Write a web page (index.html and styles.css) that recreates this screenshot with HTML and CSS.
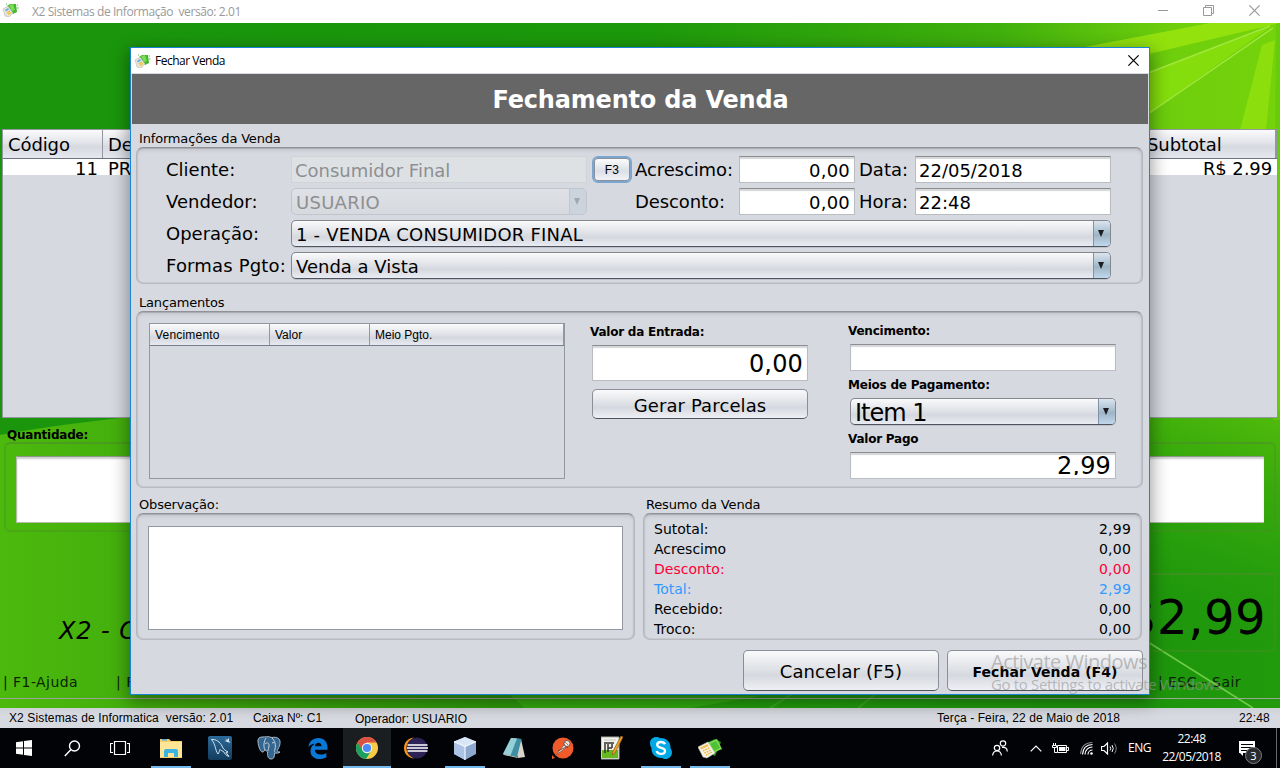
FILE: index.html
```html
<!DOCTYPE html>
<html lang="pt-BR">
<head>
<meta charset="utf-8">
<title>X2 Sistemas de Informação</title>
<link rel="stylesheet" href="styles.css">
</head>
<body>
<svg width="0" height="0" class="defs" aria-hidden="true">
  <defs>
    <symbol id="app-icon" viewBox="0 0 24 21">
      <path d="M8 5 17 1l6 3-6 14-6-3z" fill="#2f9f22"/>
      <path d="M10 5 19 1l5 10-9 4z" fill="#7ed957"/>
      <path d="M12 6l6-3 4 7-6 3z" fill="#4ec234"/>
      <path d="M0 9 10 4l7 11-8 5-4-1z" fill="#f6f3e8" stroke="#c4c2b6" stroke-width=".6"/>
      <path d="M2 9.500 9.500 6l1.200 2-7.500 3.600z" fill="#f0c353"/>
      <path d="m5 13 7-3.400M6.300 15.200l7-3.400M7.800 17.300l6.500-3.300" stroke="#eebb42" stroke-width="1.400" stroke-dasharray="1.800 .8"/>
    </symbol>
    <symbol id="app-icon-small" viewBox="0 0 17 14">
      <path d="M5 3 8 1l6 0 1 8-4 2z" fill="#3fb82c"/>
      <path d="M7 2l4-1 2 6-3 1z" fill="#7bdc55"/>
      <path d="M15 2h1M15 5h1.500M4 1h1" stroke="#57b944"/>
      <path d="M1 6 6 3l5 7-4 4-4-1z" fill="#e6e4da" stroke="#bbb9b0" stroke-width=".6"/>
      <path d="M3 7l3-2 1 1.500-3 2z" fill="#58b5e6"/>
      <path d="m5 10 3-2M6 11.500l3-2" stroke="#f2c12e" stroke-width="1.300"/>
    </symbol>
    <symbol id="close" viewBox="0 0 10 10"><path d="M.3.3l9.400 9.400M9.700.3.3 9.700" stroke="currentColor" stroke-width="1.100" fill="none"/></symbol>
  </defs>
</svg>

<div class="desktop">
  <header class="app-title">
    <svg class="app-title-icon"><use href="#app-icon-small"/></svg>
    <span class="app-title-text">X2 Sistemas de Informação&nbsp; versão: 2.01</span>
    <div class="win-buttons">
      <svg width="10" height="10" viewBox="0 0 10 10"><path d="M0 5.500h10" stroke="currentColor"/></svg>
      <svg width="11" height="11" viewBox="0 0 11 11"><path d="M.5 2.500h8v8h-8zM2.500 2.500v-2h8v8h-2" fill="none" stroke="currentColor"/></svg>
      <svg width="11" height="11"><use href="#close"/></svg>
    </div>
  </header>

  <main class="pos">
    <svg class="wallpaper" viewBox="0 23 1280 685" preserveAspectRatio="none">
      <defs>
        <linearGradient id="w-top" x1="0" x2="1" y1="0" y2="0">
          <stop offset="0" stop-color="#1a950c"/><stop offset=".5" stop-color="#1c980b"/><stop offset=".78" stop-color="#40b00c"/><stop offset=".92" stop-color="#6fcf0c"/><stop offset="1" stop-color="#75d30b"/>
        </linearGradient>
        <linearGradient id="w-low" x1="0" x2="1" y1="0" y2="0">
          <stop offset="0" stop-color="#4cb90d"/><stop offset=".15" stop-color="#3faa0c"/><stop offset=".45" stop-color="#2a940b"/><stop offset=".6" stop-color="#219c0d"/><stop offset=".9" stop-color="#1e960c"/><stop offset="1" stop-color="#219a0c"/>
        </linearGradient>
        <linearGradient id="w-right" gradientUnits="userSpaceOnUse" x1="1190" y1="640" x2="1270" y2="410">
          <stop offset="0" stop-color="#21980c" stop-opacity="0"/><stop offset=".35" stop-color="#269e0c"/><stop offset=".7" stop-color="#38aa0b"/><stop offset="1" stop-color="#51bb0b"/>
        </linearGradient>
      </defs>
      <rect y="23" width="1280" height="440" fill="url(#w-top)"/>
      <path d="M0 435Q60 424 140 416H1280V708H0z" fill="url(#w-low)"/>
      <path d="M1100 410H1280V708H1100z" fill="url(#w-right)"/>
      <path d="M1085 47 1210 23H1280L1140 56z" fill="#9ce60e" opacity=".8"/>
      <path d="M1148 73 1270 27 1148 114z" fill="#8ce20c" opacity=".75"/>
      <path d="M1148 73 1270 26M1148 114 1273 28" stroke="#b2ef4e" stroke-width="1.500" opacity=".75" fill="none"/>
      <path d="M1262 45 1275 40 1266 130H1240z" fill="#9ce80e" opacity=".6"/>
      <path d="M1276 24 1280 23V420H1273z" fill="#62c90a" opacity=".7"/>
      <path d="M1148 642 1253 708" stroke="#83da55" stroke-width="1.600" opacity=".8"/>
      <path d="m770 708 25-16M858 708l20-16" stroke="#5cbc3a" opacity=".4" stroke-width="2"/>
      <path d="M510 695Q520 703 524 708H690L760 696z" fill="#3ebb12" opacity=".5"/>
    </svg>

    <div class="sale-table">
      <div class="sale-head"><span class="c-code">Código</span><span class="c-desc">De</span><span class="c-sub">Subtotal</span></div>
      <div class="sale-row"><span class="c-code">11</span><span class="c-desc">PR</span><span class="c-sub">R$ 2,99</span></div>
    </div>
    <div class="qty-label">Quantidade:</div>
    <div class="qty-panel"><div class="qty-input"></div></div>
    <div class="sale-footer">
      <div class="company">X2 - C</div>
      <div class="grand-total">$2,99</div>
    </div>
    <div class="shortcuts"><span>| F1-Ajuda</span><span class="sc-next">| F</span><span class="sc-esc">| <b>ESC - Sair</b></span></div>
  </main>

  <footer class="status">
    <span class="st-name">X2 Sistemas de Informatica&nbsp; versão: 2.01</span>
    <span class="st-box">Caixa Nº: C1</span>
    <span class="st-op">Operador: USUARIO</span>
    <span class="st-date">Terça - Feira, 22 de Maio de 2018</span>
    <span class="st-time">22:48</span>
  </footer>

  <nav class="taskbar">
    <div class="tb tb-sys"><svg width="16" height="16" viewBox="0 0 16 16"><path d="M0 2.300 7 1.200V7.500H0zM8 1 16 0v7.500H8zM0 8.500h7v6.300L0 13.700zM8 8.500h8V16l-8-1.100z" fill="#fff"/></svg></div>
    <div class="tb tb-sys"><svg width="17" height="17" viewBox="0 0 17 17"><circle cx="10.500" cy="6" r="5" fill="none" stroke="#fff" stroke-width="1.400"/><path d="M6.800 9.800.8 16" stroke="#fff" stroke-width="1.500"/></svg></div>
    <div class="tb tb-sys"><svg width="20" height="14" viewBox="0 0 20 14"><path d="M4.500.5h11v13h-11zM3 2.500H.5v9H3M17 2.500h2.500v9H17" fill="none" stroke="#fff" stroke-width="1.200"/></svg></div>
    <div class="apps">
      <div class="tb run"><svg width="22" height="20" viewBox="0 0 22 20"><path d="M0 1h9l2 2h11v17H0z" fill="#f5cf63"/><path d="M0 4h22v15H0z" fill="#ffe596"/><path d="M2 1h5v1.500H2z" fill="#57a6d8"/><path d="M4 19v-6q0-2 2-2h10q2 0 2 2v6h-4v-4H8v4z" fill="#3bb4e4"/></svg></div>
      <div class="tb"><svg width="24" height="24" viewBox="0 0 24 24"><defs><linearGradient id="my" x2="0" y2="1"><stop stop-color="#2c6a9b"/><stop offset="1" stop-color="#123c5c"/></linearGradient></defs><rect width="24" height="24" rx="2" fill="url(#my)"/><path d="M3.500 3.500C8 3 12 6 14 10c1 3 3 4.500 6 6l-2 .5 3 4c-3-1-4.500-3-5.500-5-2-1-3-1-3.500-2-1 1.500-.5 2.500-2 4.500C7 14 8 9 3.500 3.500z" fill="none" stroke="#d7e5ef" stroke-width="1"/><path d="m17 2 2 2 2-2v3l1.500 2-3-1-3-1 2-.5z" fill="#d7e5ef"/></svg></div>
      <div class="tb"><svg width="24" height="24" viewBox="0 0 24 24"><path d="M5 1C2 1 .5 3 1 6c.4 4 2 9 4 10 1.500.5 2-1 3-2 1.500 1 2 1 2.500 2 0 3 0 7 3.500 7s3.500-3 3.500-6c2 .3 4 .3 5.500-1-3 0-3-1-2-3 2-3 3-8 1-10-2-2-5-2-7-1.500C11 0 8 1 5 1z" fill="#336791" stroke="#b9c6d2" stroke-width=".9"/><path d="M8 14c-2-4-1-9 1-12M8 8c2-2 4-1 4 1 0 3-1 4-1 6M15 2c3 3 4 7 3 11-.5 2-1 2 0 3M15 7l2-.5" fill="none" stroke="#c9d3dd"/></svg></div>
      <div class="tb"><svg width="20" height="21" viewBox="0 0 20 21"><path d="M.5 9C1 3.500 5 0 10.500 0 16 0 19.500 4 19.500 9.500v2.300H6.800c.3 3.500 3 4.800 6 4.800 2.200 0 4-.6 5.600-1.600v4.200c-2 1.200-4.200 1.800-6.800 1.800C6 21 2.500 17.800 2.500 13.200c0-3.500 1.700-6 4.500-7.400C3.800 6 1.800 7.200.5 9zM7 8.300h6.500C13.500 6 12.300 4.800 10.400 4.800 8.500 4.800 7.300 6.200 7 8.300z" fill="#0a78d7"/></svg></div>
      <div class="tb run active"><svg width="22" height="22" viewBox="0 0 22 22"><circle cx="11" cy="11" r="11" fill="#f7cb45"/><path d="M1.500 5.500A11 11 0 0 1 20.500 5.500H11L6 13.500z" fill="#dd5144"/><path d="M1.500 5.500A11 11 0 0 0 10 22L15 14 6.500 13.500z" fill="#1aa15f"/><circle cx="11" cy="11" r="5.200" fill="#f1f1f1"/><circle cx="11" cy="11" r="4.100" fill="#4c8bf5"/></svg></div>
      <div class="tb"><svg width="24" height="22" viewBox="0 0 24 22"><circle cx="13" cy="11" r="10.500" fill="#2c2255"/><path d="M10 .5C3 1.500 0 6 0 11s3 9.500 10 10.500C5.500 19 2.500 16 2.500 11S5.500 3 10 .5z" fill="#f7941e"/><path d="M3.500 8h20M3 11h21M3.500 14h20" stroke="#fff" stroke-width="1.600"/></svg></div>
      <div class="tb run"><svg width="22" height="23" viewBox="0 0 22 23"><path d="M11 0 22 4.500V17l-11 6-11-6V4.500z" fill="#8ca8cf"/><path d="M11 0 22 4.500 11 9.500 0 4.500z" fill="#d9e6f6"/><path d="M0 4.500 11 9.500V23L0 17z" fill="#acc3e3"/><path d="M0 4.500 11 9.500 22 4.500M11 9.500V23" fill="none" stroke="#eef5ff" stroke-width="1.200"/></svg></div>
      <div class="tb"><svg width="22" height="22" viewBox="0 0 22 22"><path d="M8 1 18 2l4 18-7 1z" fill="#d8d4ca"/><path d="M8 1 18.500 2 14 20 0 17z" fill="#3f8fa4"/><path d="M8 1 14 1.500 7.500 18.500 0 17z" fill="#a6dbe1" opacity=".85"/><path d="M0 17l14 3 1 1-14-3z" fill="#e8e8e2"/></svg></div>
      <div class="tb"><svg width="22" height="22" viewBox="0 0 22 22"><circle cx="11" cy="11" r="10.500" fill="#f15a29"/><path d="m4 18 8-10 2.500 2.500L4 18z" fill="#f7f1ec" stroke="#84523e" stroke-width=".8"/><path d="m6 14 8-4M13 8l3 3" stroke="#704b3b"/><circle cx="15" cy="6.500" r="3" fill="#eee" stroke="#70584e"/><path d="m13 5 3 3" stroke="#f15a29"/><path d="M0 22v-4l3 3z" fill="#f15a29"/></svg></div>
      <div class="tb"><svg width="22" height="24" viewBox="0 0 22 24"><path d="M0 1h18v22H0z" fill="#f3f3ec" stroke="#a8aaa0"/><path d="M1 14h16v8H1z" fill="#66ba20"/><path d="M3 7h10M4 8v9M7 8v8M7 12h4M11 8v4" stroke="#333" stroke-width="1.500"/><path d="M3 4h12" stroke="#c5c5c5"/><path d="m20 0 2 1-8 16-3 2 1-4z" fill="#efa229" stroke="#8c5b16" stroke-width=".7"/></svg></div>
      <div class="tb run"><svg width="22" height="22" viewBox="0 0 22 22"><path d="M6 0c2 0 3 .5 4 1 6-.5 11 4 10.500 10 .5 1 1.500 2.500 1.500 4.500 0 4-3.500 6.500-6.500 6.500-1.500 0-2.500-.5-3.500-1C6 21.500 1 17 1.500 11 .5 9.500 0 8 0 6c0-3.500 3-6 6-6z" fill="#00a8e6"/><path d="M15 7.300C14.300 5.600 12.800 5 11 5 8.700 5 7.200 6 7.200 7.800c0 4 7.800 2.100 7.800 5.900 0 2-1.700 3.200-4 3.200-2.200 0-3.800-.8-4.300-2.900" fill="none" stroke="#fff" stroke-width="2.300"/></svg></div>
      <div class="tb run"><svg width="24" height="21"><use href="#app-icon"/></svg></div>
    </div>
    <div class="tray">
      <svg class="t-people" width="16" height="16" viewBox="0 0 16 16"><g fill="none" stroke="#fff" stroke-width="1.200"><circle cx="11" cy="3.500" r="2.700"/><path d="M10 7.500q5-1 5.300 4"/><circle cx="5" cy="8" r="2.700"/><path d="M.6 15.500q.5-4.500 4.400-4.500t4.400 4.500"/></g></svg>
      <svg class="t-caret" width="12" height="7" viewBox="0 0 12 7"><path d="m.7 6.300 5.300-5.300 5.300 5.300" fill="none" stroke="#fff" stroke-width="1.200"/></svg>
      <svg class="t-bat" width="17" height="11" viewBox="0 0 17 11"><path d="M5.500 2.500h9v7h-9zM15 4.500h1.500v3H15M1.500 0v2.500M3.500 0v2.500M.5 2.500h4v2h-4zM2.500 4.500v5H5" fill="none" stroke="#fff"/><path d="M7 4h6.500v4H7z" fill="#fff"/></svg>
      <svg class="t-wifi" width="13" height="13" viewBox="0 0 13 13"><circle cx="11.500" cy="11.500" r="1.300" fill="#fff"/><g fill="none" stroke="#fff" stroke-width="1.200"><path d="M8 12.500A4.500 4.500 0 0 1 12.500 8M5 12.500A7.500 7.500 0 0 1 12.500 5M2.500 12.500Q3 3 12.500 2.500"/><path d="M.5 12Q1 1 12.500.5" opacity=".5"/></g></svg>
      <svg class="t-snd" width="17" height="13" viewBox="0 0 17 13"><g fill="none" stroke="#fff"><path d="M.5 4.500H3L6.500 1v11L3 8.500H.5z" stroke-width="1.200"/><path d="M9 4.500q1.500 2 0 4M11 3q2.500 3.500 0 7"/><path d="M13.500 1.500q3.500 5 0 10" opacity=".5"/></g></svg>
      <span class="t-lang">ENG</span>
      <div class="t-clock"><span>22:48</span><span>22/05/2018</span></div>
      <div class="t-note"><svg width="16" height="15" viewBox="0 0 16 15"><path d="M0 0h16v12H4v3l-3-3H0z" fill="#fff"/><path d="M2 3.500h12M2 6.500h12M2 9.500h8" stroke="#000"/></svg><span class="badge">3</span></div>
      <div class="t-peek"></div>
    </div>
  </nav>

  <section class="dialog">
    <header class="dlg-title">
      <svg class="dlg-icon"><use href="#app-icon-small"/></svg>
      <span>Fechar Venda</span>
      <svg class="dlg-close"><use href="#close"/></svg>
    </header>
    <h1 class="dlg-head">Fechamento da Venda</h1>
    <div class="dlg-body">
      <div class="g-label g1">Informações da Venda</div>
      <div class="panel info">
        <label>Cliente:</label><div class="input off">Consumidor Final</div><button class="f3">F3</button><label class="tight">Acrescimo:</label><div class="input num">0,00</div><label class="mid">Data:</label><div class="input">22/05/2018</div>
        <label>Vendedor:</label><div class="combo off"><span>USUARIO</span><i></i></div><b></b><label class="tight">Desconto:</label><div class="input num">0,00</div><label class="mid">Hora:</label><div class="input">22:48</div>
        <label>Operação:</label><div class="combo wide"><span class="op">1 - VENDA CONSUMIDOR FINAL</span><i></i></div>
        <label class="fp">Formas Pgto:</label><div class="combo wide"><span>Venda a Vista</span><i></i></div>
      </div>

      <div class="g-label g2">Lançamentos</div>
      <div class="panel entries">
        <div class="grid-table"><div class="grid-head"><span class="w1">Vencimento</span><span class="w2">Valor</span><span class="w3">Meio Pgto.</span></div></div>
        <div class="entry">
          <div class="b-label">Valor da Entrada:</div>
          <div class="input big">0,00</div>
          <button class="btn gerar">Gerar Parcelas</button>
        </div>
        <div class="pay">
          <div class="b-label">Vencimento:</div><div class="input"></div>
          <div class="b-label">Meios de Pagamento:</div><div class="combo item"><span>Item 1</span><i></i></div>
          <div class="b-label">Valor Pago</div><div class="input paid"><span>2,99</span></div>
        </div>
      </div>

      <div class="bottom">
        <div class="obs"><div class="g-label g3">Observação:</div><div class="panel obs-panel"><div class="textarea"></div></div></div>
        <div class="resumo"><div class="g-label g3">Resumo da Venda</div>
          <div class="panel sums">
            <div><span>Sutotal:</span><span>2,99</span></div>
            <div><span>Acrescimo</span><span>0,00</span></div>
            <div class="red"><span>Desconto:</span><span>0,00</span></div>
            <div class="blue"><span>Total:</span><span>2,99</span></div>
            <div><span>Recebido:</span><span>0,00</span></div>
            <div><span>Troco:</span><span>0,00</span></div>
          </div>
        </div>
      </div>
      <div class="actions"><button class="btn">Cancelar (F5)</button><button class="btn strong">Fechar Venda (F4)</button></div>
    </div>
  </section>

  <div class="watermark"><div class="wm1">Activate Windows</div><div class="wm2">Go to Settings to activate Windows.</div></div>
</div>
</body>
</html>
```
FILE: styles.css
```css
* { box-sizing: border-box; }
body { margin: 0; font-family: "DejaVu Sans", Verdana, sans-serif; color: #000; overflow: hidden; }
svg { display: block; flex: none; }
button { font-family: inherit; color: inherit; padding: 0; margin: 0; }
.defs { position: absolute; }
.desktop { position: relative; width: 1280px; height: 768px; display: flex; flex-direction: column; overflow: hidden; white-space: nowrap; }

/* Main window title bar */
.app-title { height: 23px; background: #fff; color: #999; display: flex; align-items: center; padding: 0 20px 3px 2px; font: 12px/16px "Open Sans", sans-serif; }
.app-title-icon { width: 17px; height: 14px; margin-right: 13px; }
.app-title-text { letter-spacing: -.41px; padding-top: 3px; }
.win-buttons { margin-left: auto; display: flex; align-items: center; gap: 35px; }

/* Point of sale window behind the dialog */
.pos { position: relative; height: 685px; display: flex; flex-direction: column; padding-top: 106px; }
.wallpaper { position: absolute; inset: 0; width: 1280px; height: 685px; }
.sale-table { position: relative; width: 1276px; height: 289px; margin-left: 2px; background: #d6d9df; border: 1px solid #9297a1; font-size: 18px; }
.sale-head, .sale-row { display: flex; }
.sale-head { height: 29px; line-height: 29px; background: linear-gradient(#fbfbfc, #e2e4e9 45%, #d6d9df 60%, #e6e8ef); border-bottom: 1px solid #6b7180; }
.sale-head .c-code { border-right: 1px solid #9297a1; letter-spacing: -.1px; }
.sale-row { height: 16px; line-height: 19px; background: #fff; overflow: hidden; }
.c-code { width: 100px; padding-left: 5px; }
.sale-row .c-code { text-align: right; padding-right: 5px; }
.c-desc { width: 1036px; padding-left: 5px; }
.c-sub { flex: 1; padding: 0 5px 0 8px; letter-spacing: -.1px; }
.sale-row .c-sub { text-align: right; }
.sale-head .c-sub { border-right: 2px solid #9297a1; }
.qty-label { position: relative; height: 24px; padding: 8px 0 0 7px; font: bold 12px/18px "DejaVu Sans", sans-serif; letter-spacing: -.22px; }
.qty-panel { position: relative; margin: 0 4px 0 4px; height: 90px; border: 2px solid #4c902866; border-top-color: #4c902899; border-radius: 6px; padding: 12px 10px 0 10px; }
.qty-input { height: 67px; background: #fff; border: 1px solid #b3bda9; border-top-color: #8e9886; box-shadow: inset 0 2px 2px #ccc; border-right: 0; }
.sale-footer { position: relative; height: 119px; margin-top: 1px; display: flex; justify-content: space-between; padding: 40px 4px 0 59px; }
.company { font: italic 24px/30px "DejaVu Sans", sans-serif; letter-spacing: .9px; padding-top: 43px; }
.grand-total { width: 400px; height: 79px; border: 2px solid #4c902866; border-top-color: #4c902899; border-radius: 6px; font-size: 48px; line-height: 84px; letter-spacing: .5px; text-align: right; padding-right: 8px; }
.shortcuts { position: relative; margin-top: 18px; height: 29px; display: flex; font-size: 14px; line-height: 25px; letter-spacing: .44px; color: #082304; padding-left: 3px; border-bottom: 1px solid #9da49a; }
.sc-next { margin-left: 38px; }
.sc-esc { margin-left: auto; padding-right: 39px; }
.sc-esc b { font-weight: normal; }

/* Status bar */
.status { height: 20px; background: linear-gradient(#cfd2d8, #d6d9df 40%); display: flex; font: 12px/20px "Liberation Sans", sans-serif; padding: 0 10px 0 9px; }
.st-name { width: 244px; letter-spacing: .12px; }
.st-box { width: 102px; }
.st-op { padding-top: 1px; }
.st-date { margin-left: auto; width: 302px; letter-spacing: .09px; }
.st-time { letter-spacing: .2px; }

/* Taskbar */
.taskbar { height: 40px; background: #010307; display: flex; color: #fff; }
.tb { width: 48px; height: 40px; display: flex; align-items: center; justify-content: center; position: relative; }
.apps { display: flex; gap: 1px; margin-left: 3px; }
.run::after { content: ""; position: absolute; left: 4px; right: 4px; bottom: 0; height: 2px; background: #76b9ed; }
.active { background: #1a1e21; }
.active::after { left: 0; right: 0; }
.tray { margin-left: auto; display: flex; align-items: center; font: 12px/18px "Open Sans", sans-serif; letter-spacing: -.5px; height: 40px; }
.t-people { margin-right: 22px; }
.t-caret { margin-right: 10px; }
.t-bat { margin-right: 11px; }
.t-wifi { margin-right: 8px; }
.t-snd { margin-right: 10px; }
.t-lang { width: 34px; }
.t-clock { width: 59px; display: flex; flex-direction: column; align-items: center; }
.t-note { position: relative; margin: 0 21px 0 18px; }
.badge { position: absolute; left: 6px; top: 6px; width: 17px; height: 17px; border-radius: 50%; background: #292b2e; border: 1px solid #7c7e80; font-size: 11px; line-height: 15px; text-align: center; letter-spacing: 0; }
.t-peek { width: 4px; height: 40px; border-left: 1px solid #66696d; }

/* Dialog window */
.dialog { position: absolute; left: 130px; top: 47px; width: 1020px; height: 648px; border: 1px solid #1883d7; background: #d6d9df; box-shadow: 0 5px 16px 2px rgba(0, 0, 0, .38); }
.dlg-title { height: 25px; background: #fff; display: flex; align-items: center; font: 12px/24px "Open Sans", sans-serif; letter-spacing: -.5px; padding: 0 10px 0 3px; }
.dlg-icon { width: 17px; height: 14px; margin-right: 4px; }
.dlg-close { width: 11px; height: 11px; margin-left: auto; }
.dlg-head { margin: 1px 1px 0; height: 50px; background: #666; color: #fff; font: bold 24px/52px "DejaVu Sans", sans-serif; letter-spacing: -.19px; text-align: center; padding-left: 1px; }
.dlg-body { padding: 0 6px 0 5px; }
.g-label { font-size: 13px; letter-spacing: -.17px; line-height: 18px; padding-left: 3px; }
.g1 { height: 23px; padding-top: 6px; }
.g2 { height: 27px; padding-top: 10px; }
.g3 { height: 25px; padding-top: 8px; }
.panel { border: 1px solid #b4b6bc; border-top-color: #909298; border-bottom-color: #b9bbc1; border-radius: 7px; padding-left: 1px; box-shadow: inset 0 1px 0 #abadb3, inset 0 3px 3px #c7c9cf, inset 1px 0 1px #bdbfc5, inset -1px 0 1px #bdbfc5, inset 0 -1px 0 #c9ccd1; }

.info { height: 137px; padding: 8px 0 0 29px; display: grid; grid-template-columns: 125px 296px 48px 104px 116px 60px 196px; grid-auto-rows: 32px; font-size: 18px; }
.info label { line-height: 28px; }
.info .tight { letter-spacing: -.09px; }
.info .mid { padding-left: 4px; }
.info .fp { letter-spacing: .18px; }
.input { height: 27px; background: #fff; border: 1px solid #b9bcc1; border-top-color: #8b8d92; box-shadow: inset 0 2px 1px #d5d6d8; line-height: 28px; padding: 0 4px 0 3px; overflow: hidden; }
.num { text-align: right; letter-spacing: .2px; }
.input.off { background: #dde1e4; border-color: #d0d4d7; box-shadow: none; color: #8e8f91; padding-left: 3px; }
.combo { height: 27px; border: 1px solid #84878f; border-bottom-color: #4f535f; border-radius: 5px; background: linear-gradient(#fafafb, #e1e3e8 45%, #d5d8de 65%, #eaecf4); display: flex; justify-content: space-between; line-height: 27px; padding-left: 4px; overflow: hidden; box-shadow: 0 1px 0 #bfc2c9; }
.combo i { width: 17px; flex: none; border-left: 1px solid #7f93a6; background: linear-gradient(#dbe5ef, #a9bfcf 45%, #9fb5c6 55%, #c0d8ec); display: flex; }
.combo i::before { content: ""; margin: 9px 0 0 4px; border: 3.500px solid transparent; border-top: 7px solid #1c1d20; border-bottom: 0; height: 0; }
.wide { grid-column: 2 / 8; }
.op { letter-spacing: .21px; }
.combo.off { color: #8e8f91; letter-spacing: .28px; border-color: #c2c5cb; background: linear-gradient(#dfe1e6, #d6d9de); box-shadow: none; }
.combo.off i { background: #cbd4dd; border-color: #c0c7ce; }
.combo.off i::before { border-top-color: #a1a7af; }
.f3 { justify-self: start; margin: 0 0 0 5px; width: 40px; height: 27px; border: 2px solid #7ba6cf; border-radius: 6px; box-shadow: inset 0 0 0 1px #8b8f99; background: linear-gradient(#fff, #dcdfe4 55%, #f2f4f8); font: 12px "Liberation Sans", sans-serif; letter-spacing: .3px; }

.entries { height: 177px; display: flex; padding: 11px 0 0 12px; }
.grid-table { width: 416px; height: 156px; border: 1px solid #9297a1; }
.grid-head { height: 22px; display: flex; background: linear-gradient(#fbfbfc, #e2e4e9 45%, #d4d7dd 65%, #e8eaf1); border-bottom: 1px solid #777d8a; font: 12px/22px "Liberation Sans", sans-serif; }
.grid-head span { padding-left: 5px; border-right: 1px solid #9297a1; }
.w1 { width: 120px; letter-spacing: .2px; }
.w2 { width: 100px; }
.w3 { flex: 1; }
.b-label { font-weight: bold; font-size: 12px; line-height: 18px; letter-spacing: -.22px; margin-left: -2px; }
.entry { width: 216px; margin-left: 27px; }
.entry .b-label { height: 22px; }
.big { height: 36px; font-size: 24px; line-height: 37px; text-align: right; letter-spacing: .15px; }
.btn { display: block; border: 1px solid #8b8e96; border-bottom-color: #50545f; border-radius: 5px; background: linear-gradient(#fafafb, #e0e2e7 45%, #d5d8de 62%, #eff0f6); font-size: 18px; letter-spacing: .12px; }
.gerar { width: 216px; height: 30px; margin-top: 8px; padding-top: 2px; }
.pay { width: 266px; margin-left: 42px; margin-top: -1px; }
.pay .b-label { height: 28px; padding-top: 5px; line-height: 18px; }
.pay .b-label:first-child { height: 22px; padding-top: 0; }
.pay .input, .pay .combo { height: 27px; }
.pay .b-label ~ .b-label { height: 27px; }
.item { font-size: 24px; letter-spacing: -1px; line-height: 28px; }
.paid { text-align: right; font-size: 24px; line-height: 27px; letter-spacing: .15px; padding-bottom: 3px; }
.paid span { display: block; height: 22px; overflow: hidden; }

.bottom { display: flex; gap: 8px; }
.obs, .resumo { width: 499px; }
.obs-panel { height: 127px; padding: 12px 11px 0; }
.textarea { height: 104px; background: #fff; border: 1px solid #9297a1; }
.sums { height: 127px; padding: 5px 10px 0; font-size: 14px; line-height: 20px; }
.sums div { display: flex; justify-content: space-between; letter-spacing: 0; }
.sums div span:last-child { letter-spacing: .2px; }
.red { color: #ff0033; }
.blue { color: #3399ff; }
.actions { display: flex; justify-content: flex-end; gap: 8px; padding-top: 10px; }
.actions .btn { width: 196px; height: 41px; padding-top: 2px; }
.actions .strong { font-weight: bold; font-size: 14px; letter-spacing: .06px; }

/* Activation notice */
.watermark { position: absolute; left: 991px; top: 648px; font-family: "Open Sans", sans-serif; color: rgba(150, 150, 150, .62); }
.wm1 { font-size: 20px; line-height: 28px; letter-spacing: -.51px; }
.wm2 { font-size: 15px; line-height: 17px; letter-spacing: -.34px; }
```
